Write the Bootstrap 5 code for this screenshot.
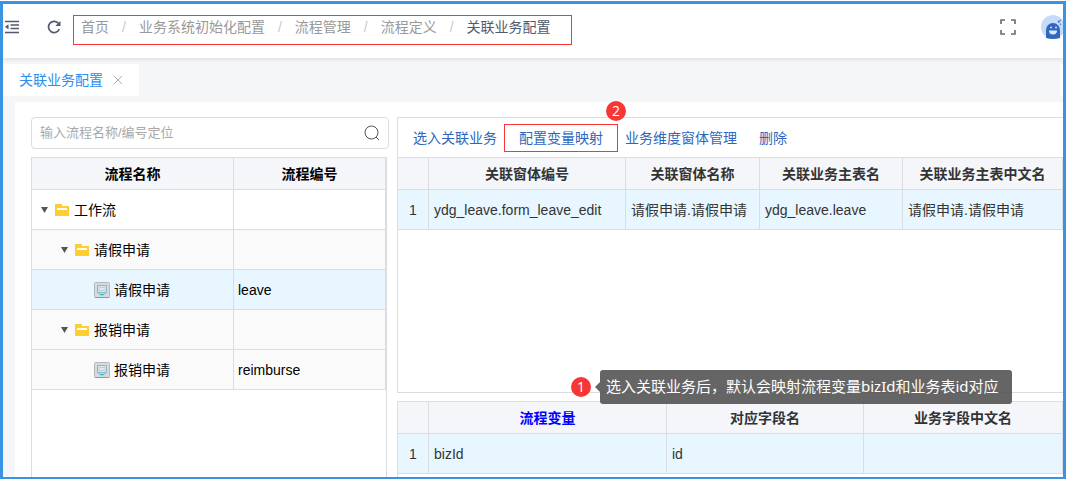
<!DOCTYPE html>
<html lang="zh-CN">
<head>
<meta charset="utf-8">
<meta name="viewport" content="width=device-width, initial-scale=1">
<title>关联业务配置</title>
<link href="https://cdn.jsdelivr.net/npm/bootstrap@5.3.0/dist/css/bootstrap.min.css" rel="stylesheet">
<style>
  :root { --line: #dcdde1; --red: #f93636; }
  body { font: 14px/20px "Liberation Sans", "Noto Sans CJK SC", sans-serif; color: #333; background: #fff; }
  .shell { padding-top: 1px; }
  .frame { border: 3px solid #3a93e2; border-bottom-width: 2px; background: #f4f6f8; }
  .topbar { height: 54px; flex: none; box-shadow: 0 1px 4px rgba(0, 21, 41, .12); z-index: 1; padding: 0 0 8px 2px; }
  .topbar svg, .tree svg, .search svg { display: block; flex: none; }
  .tool { border: 0; background: none; padding: 0; color: #515a6e; }
  .reload { margin-left: 28px; }
  .avatar { margin-left: 25px; }
  .crumbs { border: 1px solid var(--red); height: 30px; margin: 0 0 5px 12px; padding: 0 20px 6px 7px; }
  .crumbs .breadcrumb { --bs-breadcrumb-item-padding-x: 13px; --bs-breadcrumb-divider-color: #c8cad0; }
  .crumbs a { color: #999; text-decoration: none; }
  .crumbs .active { color: #515a6e; }
  .tabs { padding: 6px 0; flex: none; }
  .tab-open { height: 32px; padding: 0 16px; border-radius: 0 3px 3px 0; gap: 10px; }
  .tab-open svg { display: block; }
  .tab-open a { color: #2d8cf0; text-decoration: none; }
  .tab-menu { width: 3px; border: 0; border-radius: 3px 0 0 3px; padding: 0; }
  .content { margin-left: 12px; padding: 15px 0 0 16px; gap: 8px; min-height: 0; }
  .left { flex: 0 0 358px; gap: 8px; }
  .search { height: 32px; border: 1px solid var(--line); border-radius: 4px; padding: 0 8px; }
  .search input { border: 0; padding: 0; font-size: 13px; line-height: 20px; outline: 0; background: none; min-width: 0; }
  .search input::placeholder { color: #a9a9a9; opacity: 1; }
  .pane { border: 1px solid var(--line); border-width: 1px 0 0 1px; }
  .tree-pane { border-right-width: 1px; margin-right: 2px; }
  .grid-table { table-layout: fixed; width: 100%; border-collapse: separate; border-spacing: 0; }
  .grid-table th, .grid-table td { border: 0 solid var(--line); border-width: 0 1px 1px 0; padding: 0 5px; white-space: nowrap; overflow: hidden; }
  .grid-table th { height: 32px; background: #f5f6fa; text-align: center; font-weight: 700; }
  .grid-table td { height: 40px; background: #e8f7ff; }
  .grid-table td:first-child { text-align: center; }
  .grid-table.tree { color: #000; }
  .grid-table.tree td { background: #fafafa; padding: 0 4px; }
  .grid-table.tree tr.top-row td { background: #fff; }
  .grid-table.tree tr.chosen td { background: #e8f7ff; }
  .node { gap: 5px; padding-left: 5px; }
  .node.level-2 { padding-left: 25px; }
  .node.level-3 { padding-left: 58px; gap: 4px; }
  .toggle { border: 0; background: none; padding: 0; margin-right: 2px; }
  .key { color: #00f; }
  .right { min-width: 0; gap: 8px; }
  .upper { border-bottom-width: 1px; min-height: 0; }
  .actions { height: 40px; border-bottom: 1px solid var(--line); padding-left: 8px; }
  .actions button { border: 0; background: none; color: #2f66bd; padding: 0 7px; height: 28px; line-height: 20px; }
  .actions .boxed { border: 1px solid var(--red); padding: 0 14px; }
  .lower { height: 76px; flex: none; }
  .step { width: 20px; height: 20px; border-radius: 50%; background: var(--red); color: #fff; font: 14px/20px "Open Sans", sans-serif; text-align: center; }
  .step-two { right: -9px; top: -24px; }
  .hint { left: 173px; top: -32px; gap: 4px; }
  .hint-text { background: rgba(78, 78, 78, .87); color: #fff; border-radius: 3px; font: 15px/20px "Noto Sans", "Noto Sans CJK SC", sans-serif; padding: 6px 13px 8px 6px; white-space: nowrap; }
  .hint-arrow { border: 5px solid transparent; border-left: 0; border-right-color: rgba(78, 78, 78, .87); }
</style>
</head>
<body>
<svg class="d-none" aria-hidden="true">
  <symbol id="folder" viewBox="0 0 14 12"><path fill="#ffcd2e" d="M0 0h7v2h7v10H0z"/><path fill="#fff" d="M2 4h10v2H2z"/></symbol>
  <symbol id="caret" viewBox="0 0 7 6"><path fill="#555" d="M0 0h7L3.500 6z"/></symbol>
  <symbol id="form" viewBox="0 0 16 16">
    <rect x=".5" y=".5" width="15" height="15" rx="1" fill="#d9dadd" stroke="#b4b7bc"/>
    <path d="M1 15.500h14" stroke="#8f98a2"/>
    <rect x="3.500" y="3.500" width="9" height="7" fill="#d3e8ef" stroke="#93b6c3"/>
    <path d="M5 5.500h6v3H5z" fill="#e3e8eb" stroke="#a7c2cb" stroke-width=".6"/>
    <path d="M4 11l3 2h2l3-2" fill="none" stroke="#9ab4be"/><path d="M6 12.500h4" stroke="#20b9da"/>
  </symbol>
</svg>
<div class="shell vh-100 d-flex flex-column">
<div class="frame flex-grow-1 d-flex flex-column overflow-hidden">
  <header class="topbar bg-white d-flex align-items-center position-relative">
    <button class="tool" type="button" aria-label="收起菜单">
      <svg width="14" height="14" viewBox="0 0 14 14" fill="none" stroke="#515a6e" stroke-width="1.300"><path d="M0 1.500h14M5.500 5h8.500M5.500 8.500h8.500M0 12.500h14"/><path fill="#515a6e" stroke="none" d="M0 6.800L3.500 4.200v5.200z"/></svg>
    </button>
    <button class="tool reload" type="button" aria-label="刷新">
      <svg width="14" height="14" viewBox="0 0 14 14"><path d="M11.600 3.600A5.600 5.600 0 1 0 12.300 9" fill="none" stroke="#515a6e" stroke-width="1.700"/><path d="M13.500 1v5H8.300z" fill="#515a6e"/></svg>
    </button>
    <nav class="crumbs d-flex align-items-center align-self-end" aria-label="位置">
      <ol class="breadcrumb mb-0 flex-nowrap">
        <li class="breadcrumb-item"><a href="#">首页</a></li>
        <li class="breadcrumb-item"><a href="#">业务系统初始化配置</a></li>
        <li class="breadcrumb-item"><a href="#">流程管理</a></li>
        <li class="breadcrumb-item"><a href="#">流程定义</a></li>
        <li class="breadcrumb-item active" aria-current="page">关联业务配置</li>
      </ol>
    </nav>
    <button class="tool ms-auto" type="button" aria-label="全屏">
      <svg width="16" height="16" viewBox="0 0 16 16" fill="none" stroke="#626a7a" stroke-width="1.600"><path d="M1 5V1h4M11 1h4v4M15 11v4h-4M5 15H1v-4"/></svg>
    </button>
    <button class="tool avatar" type="button" aria-label="用户">
      <svg width="22" height="24" viewBox="0 0 22 24"><circle cx="12" cy="12" r="12" fill="#c6dbfa"/><path d="M5 23v-8a7 7 0 0 1 14 0v8q-7 2-14 0z" fill="#3168bd"/><path d="M8 15.500h8q0 4-4 4t-4-4z" fill="#dce9fb"/><path d="M9 12.500h2M14 12.500h2" stroke="#c6dbfa" stroke-width="1.500"/><path d="M17 6l1.500 1.500M19 9l1 .5M19 5l.5 1" stroke="#3168bd" stroke-width="1.300"/></svg>
    </button>
  </header>
  <div class="tabs d-flex justify-content-between">
    <div class="tab-open bg-white d-flex align-items-center">
      <a href="#">关联业务配置</a>
      <button class="tool" type="button" aria-label="关闭"><svg width="10" height="10" viewBox="0 0 10 10" stroke="#a8abb2"><path d="M1 1l8 8M9 1L1 9"/></svg></button>
    </div>
    <button class="tab-menu bg-white" type="button" aria-label="标签菜单"></button>
  </div>
  <main class="content bg-white flex-grow-1 d-flex">
    <section class="left d-flex flex-column">
      <div class="search d-flex align-items-center">
        <input class="flex-grow-1" type="text" aria-label="流程定位" placeholder="输入流程名称/编号定位">
        <svg width="16" height="16" viewBox="0 0 16 16" fill="none" stroke="#555"><circle cx="7.500" cy="7.500" r="6.500"/><path d="M12 12l3 3"/></svg>
      </div>
      <div class="pane tree-pane flex-grow-1">
        <table class="grid-table tree">
          <colgroup><col style="width:202px"><col></colgroup>
          <thead><tr><th>流程名称</th><th>流程编号</th></tr></thead>
          <tbody>
            <tr class="top-row"><td><div class="node d-flex align-items-center"><button class="toggle" type="button" aria-label="折叠"><svg width="7" height="6"><use href="#caret"/></svg></button><svg width="14" height="12"><use href="#folder"/></svg>工作流</div></td><td></td></tr>
            <tr><td><div class="node level-2 d-flex align-items-center"><button class="toggle" type="button" aria-label="折叠"><svg width="7" height="6"><use href="#caret"/></svg></button><svg width="14" height="12"><use href="#folder"/></svg>请假申请</div></td><td></td></tr>
            <tr class="chosen"><td><div class="node level-3 d-flex align-items-center"><svg width="16" height="16"><use href="#form"/></svg>请假申请</div></td><td>leave</td></tr>
            <tr><td><div class="node level-2 d-flex align-items-center"><button class="toggle" type="button" aria-label="折叠"><svg width="7" height="6"><use href="#caret"/></svg></button><svg width="14" height="12"><use href="#folder"/></svg>报销申请</div></td><td></td></tr>
            <tr><td><div class="node level-3 d-flex align-items-center"><svg width="16" height="16"><use href="#form"/></svg>报销申请</div></td><td>reimburse</td></tr>
          </tbody>
        </table>
      </div>
    </section>
    <section class="right flex-grow-1 d-flex flex-column">
      <div class="pane upper flex-grow-1">
        <div class="actions d-flex align-items-center">
          <button type="button">选入关联业务</button>
          <button type="button" class="boxed position-relative">配置变量映射<span class="step step-two position-absolute">2</span></button>
          <button type="button">业务维度窗体管理</button>
          <button type="button" class="ms-2">删除</button>
        </div>
        <table class="grid-table">
          <colgroup><col style="width:31px"><col style="width:197px"><col style="width:134px"><col style="width:143px"><col></colgroup>
          <thead><tr><th></th><th>关联窗体编号</th><th>关联窗体名称</th><th>关联业务主表名</th><th>关联业务主表中文名</th></tr></thead>
          <tbody><tr><td>1</td><td>ydg_leave.form_leave_edit</td><td>请假申请.请假申请</td><td>ydg_leave.leave</td><td>请假申请.请假申请</td></tr></tbody>
        </table>
      </div>
      <div class="pane lower position-relative">
        <table class="grid-table">
          <colgroup><col style="width:31px"><col style="width:238px"><col style="width:197px"><col></colgroup>
          <thead><tr><th></th><th class="key">流程变量</th><th>对应字段名</th><th>业务字段中文名</th></tr></thead>
          <tbody><tr><td>1</td><td>bizId</td><td>id</td><td></td></tr></tbody>
        </table>
        <div class="hint position-absolute d-flex align-items-center">
          <span class="step">1</span>
          <div class="d-flex align-items-center"><span class="hint-arrow"></span><div class="hint-text" role="note">选入关联业务后，默认会映射流程变量bizId和业务表id对应</div></div>
        </div>
      </div>
    </section>
  </main>
</div>
</div>
</body>
</html>
